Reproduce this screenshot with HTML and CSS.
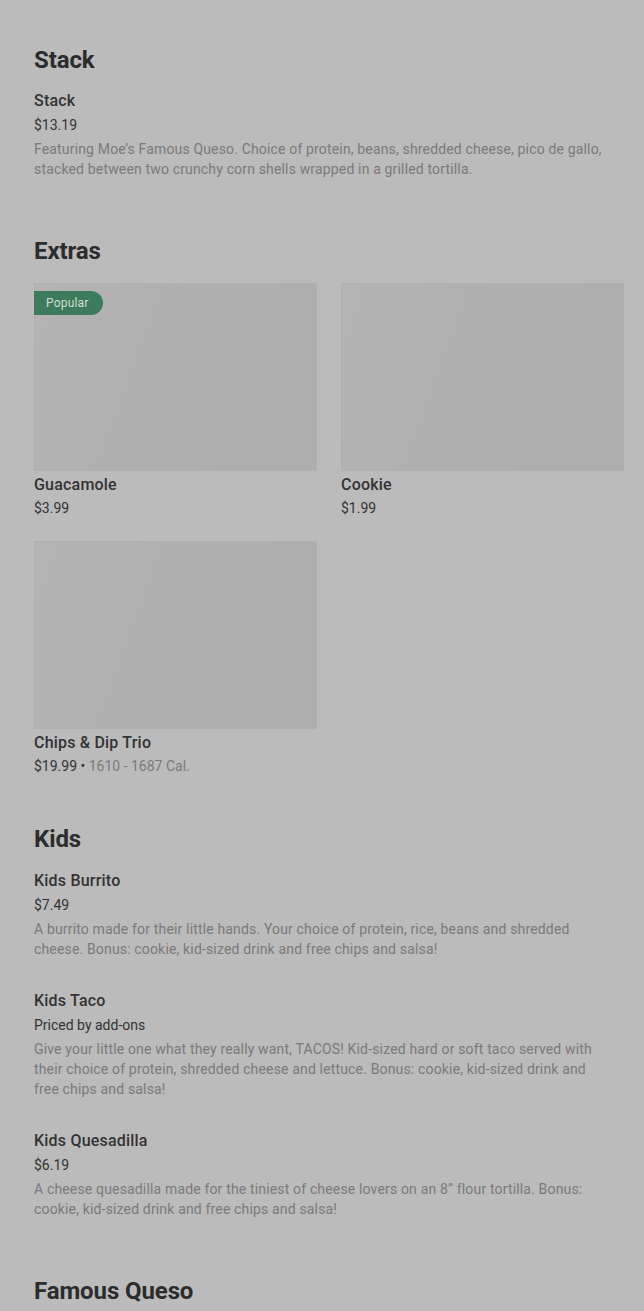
FILE: index.html
```html
<!DOCTYPE html>
<html lang="en">
<head>
<meta charset="utf-8">
<title>Menu</title>
<link rel="stylesheet" href="styles.css">
</head>
<body>
<main class="menu">
  <section class="section">
    <h2 class="section-title">Stack</h2>
    <div class="items">
      <div class="item">
        <div class="item-title">Stack</div>
        <div class="item-price">$13.19</div>
        <p class="item-desc">Featuring Moe’s Famous Queso. Choice of protein, beans, shredded cheese, pico de gallo, stacked between two crunchy corn shells wrapped in a grilled tortilla.</p>
      </div>
    </div>
  </section>

  <section class="section section-grid">
    <h2 class="section-title">Extras</h2>
    <div class="grid">
      <div class="card">
        <div class="card-img"><span class="badge">Popular</span></div>
        <div class="item-title">Guacamole</div>
        <div class="card-price">$3.99</div>
      </div>
      <div class="card">
        <div class="card-img"></div>
        <div class="item-title">Cookie</div>
        <div class="card-price">$1.99</div>
      </div>
      <div class="card">
        <div class="card-img"></div>
        <div class="item-title">Chips &amp; Dip Trio</div>
        <div class="card-price">$19.99 • <span class="cal">1610 - 1687 Cal.</span></div>
      </div>
    </div>
  </section>

  <section class="section section-kids">
    <h2 class="section-title">Kids</h2>
    <div class="items">
      <div class="item">
        <div class="item-title">Kids Burrito</div>
        <div class="item-price">$7.49</div>
        <p class="item-desc">A burrito made for their little hands. Your choice of protein, rice, beans and shredded cheese. Bonus: cookie, kid-sized drink and free chips and salsa!</p>
      </div>
      <div class="item">
        <div class="item-title">Kids Taco</div>
        <div class="item-price">Priced by add-ons</div>
        <p class="item-desc">Give your little one what they really want, TACOS! Kid-sized hard or soft taco served with their choice of protein, shredded cheese and lettuce. Bonus: cookie, kid-sized drink and free chips and salsa!</p>
      </div>
      <div class="item">
        <div class="item-title">Kids Quesadilla</div>
        <div class="item-price">$6.19</div>
        <p class="item-desc">A cheese quesadilla made for the tiniest of cheese lovers on an 8” flour tortilla. Bonus: cookie, kid-sized drink and free chips and salsa!</p>
      </div>
    </div>
  </section>

  <section class="section">
    <h2 class="section-title">Famous Queso</h2>
  </section>
</main>
</body>
</html>
```

FILE: styles.css
```css
html, body {
  margin: 0;
  padding: 0;
  background: #bbbbbb;
}

body {
  font-family: Roboto, "Liberation Sans", Arial, sans-serif;
  color: #2f2f2f;
  height: 1311px;
  overflow: hidden;
}

.menu {
  padding: 44px 20px 0 34px;
  display: flex;
  flex-direction: column;
  gap: 56px;
}

.section-grid {
  margin-bottom: -9px;
}

.section-title {
  margin: 0;
  font-size: 24px;
  line-height: 32px;
  font-weight: 700;
  color: #2c2c2c;
  letter-spacing: -0.1px;
}

.items {
  margin-top: 12px;
  display: flex;
  flex-direction: column;
  gap: 29px;
}

.section-kids .items {
  margin-top: 13px;
}

.item-title {
  padding-top: 2px;
  font-size: 16px;
  line-height: 22px;
  font-weight: 500;
  color: #333333;
  letter-spacing: 0.2px;
}

.item-price {
  margin-top: 3px;
  font-size: 14px;
  line-height: 20px;
  color: #333333;
}

.item-desc {
  margin: 4px 0 0;
  font-size: 14px;
  line-height: 20px;
  color: #7a7a7a;
  letter-spacing: 0.16px;
  padding-right: 10px;
}

.grid {
  margin-top: 16px;
  display: grid;
  grid-template-columns: 283px 283px;
  column-gap: 24px;
  row-gap: 23px;
}

.card-img {
  position: relative;
  height: 188px;
  background: linear-gradient(110deg, #b4b4b4 0%, #afafaf 45%, #adadad 100%);
  box-shadow: inset 0 0 0 1px #b0b0b0;
  margin-bottom: 1px;
}

.badge {
  position: absolute;
  left: 0;
  top: 8px;
  height: 24px;
  line-height: 24px;
  padding: 0 14px 0 12px;
  background: #3c7b5b;
  color: #d3dbd6;
  font-size: 12px;
  letter-spacing: 0.2px;
  border-radius: 0 12px 12px 0;
}

.card-price {
  margin-top: 2px;
  font-size: 14px;
  line-height: 20px;
  color: #333333;
}

.cal {
  color: #7a7a7a;
}
```
